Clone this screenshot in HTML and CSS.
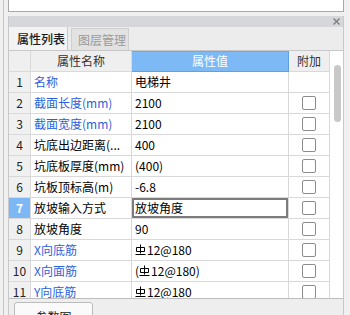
FILE: index.html
```html
<!DOCTYPE html>
<html>
<head>
<meta charset="utf-8">
<link rel="stylesheet" href="styles.css">
</head>
<body>
<div class="page">
  <div class="topbox"></div>
  <div class="panel">
    <div class="panel-head">
      <svg class="close" width="7" height="7" viewBox="0 0 7 7"><path d="M0.5 0.5L6.5 6.5M6.5 0.5L0.5 6.5" stroke="#7d7d7d" stroke-width="1.4" fill="none"/></svg>
    </div>
    <div class="tabs">
      <div class="tab active">属性列表</div>
      <div class="tab">图层管理</div>
    </div>
    <div class="grid-area">
      <div class="table">
        <div class="row head">
          <div class="c num"></div>
          <div class="c name">属性名称</div>
          <div class="c val">属性值</div>
          <div class="c ext">附加</div>
        </div>
        <div class="row">
          <div class="c num">1</div>
          <div class="c name link">名称</div>
          <div class="c val">电梯井</div>
          <div class="c ext"></div>
        </div>
        <div class="row">
          <div class="c num">2</div>
          <div class="c name link">截面长度(mm)</div>
          <div class="c val">2100</div>
          <div class="c ext"><span class="box"></span></div>
        </div>
        <div class="row">
          <div class="c num">3</div>
          <div class="c name link">截面宽度(mm)</div>
          <div class="c val">2100</div>
          <div class="c ext"><span class="box"></span></div>
        </div>
        <div class="row">
          <div class="c num">4</div>
          <div class="c name">坑底出边距离(...</div>
          <div class="c val">400</div>
          <div class="c ext"><span class="box"></span></div>
        </div>
        <div class="row">
          <div class="c num">5</div>
          <div class="c name">坑底板厚度(mm)</div>
          <div class="c val">(400)</div>
          <div class="c ext"><span class="box"></span></div>
        </div>
        <div class="row">
          <div class="c num">6</div>
          <div class="c name">坑板顶标高(m)</div>
          <div class="c val">-6.8</div>
          <div class="c ext"><span class="box"></span></div>
        </div>
        <div class="row">
          <div class="c num current">7</div>
          <div class="c name">放坡输入方式</div>
          <div class="c val focus">放坡角度</div>
          <div class="c ext"><span class="box"></span></div>
        </div>
        <div class="row">
          <div class="c num">8</div>
          <div class="c name">放坡角度</div>
          <div class="c val">90</div>
          <div class="c ext"><span class="box"></span></div>
        </div>
        <div class="row">
          <div class="c num">9</div>
          <div class="c name link">X向底筋</div>
          <div class="c val"><svg class="rebar" width="11" height="12" viewBox="0 0 11 12"><path d="M5.5 0.5V9.5M1.5 3.5H9.5V7.5H1.5ZM0.5 10.5H10.5" fill="none" stroke="#000" stroke-width="1"/></svg>12@180</div>
          <div class="c ext"><span class="box"></span></div>
        </div>
        <div class="row">
          <div class="c num">10</div>
          <div class="c name link">X向面筋</div>
          <div class="c val">(<svg class="rebar" width="11" height="12" viewBox="0 0 11 12"><path d="M5.5 0.5V9.5M1.5 3.5H9.5V7.5H1.5ZM0.5 10.5H10.5" fill="none" stroke="#000" stroke-width="1"/></svg>12@180)</div>
          <div class="c ext"><span class="box"></span></div>
        </div>
        <div class="row">
          <div class="c num">11</div>
          <div class="c name link">Y向底筋</div>
          <div class="c val"><svg class="rebar" width="11" height="12" viewBox="0 0 11 12"><path d="M5.5 0.5V9.5M1.5 3.5H9.5V7.5H1.5ZM0.5 10.5H10.5" fill="none" stroke="#000" stroke-width="1"/></svg>12@180</div>
          <div class="c ext"><span class="box"></span></div>
        </div>
      </div>
      <div class="scroll"><div class="thumb"></div></div>
    </div>
    <div class="bottom">
      <div class="btn">参数图</div>
    </div>
  </div>
</div>
</body>
</html>
```

FILE: styles.css
```css
html, body {
  margin: 0;
  height: 315px;
  overflow: hidden;
}
body {
  background: #f0f0f0;
  font-family: "Noto Sans CJK SC", "Noto Sans", sans-serif;
  font-size: 12px;
  color: #000;
}
.page {
  margin-left: 3px;
  border-left: 1px solid #c6c6c6;
  padding-left: 4px;
  width: 336px;
  height: 315px;
  overflow: hidden;
}
.topbox {
  box-sizing: border-box;
  height: 12px;
  background: #fff;
  border: 1px solid #a9a9a9;
  border-top: 0;
}
.panel {
  margin-top: 4px;
  box-sizing: border-box;
  width: 336px;
  border-left: 1px solid #c8c8c8;
  border-right: 1px solid #c8c8c8;
}
.panel-head {
  height: 11px;
  background: #d6d7db;
  display: flex;
  justify-content: flex-end;
  align-items: center;
  padding-right: 3px;
}
.close {
  display: block;
}
.tabs {
  height: 23px;
  background: #ececec;
  border-bottom: 1px solid #c8c8c8;
  display: flex;
  align-items: flex-end;
}
.tab {
  box-sizing: border-box;
  height: 22px;
  line-height: 21px;
  width: 58px;
  margin-left: 3px;
  padding-left: 6px;
  background: #e2e2e2;
  border: 1px solid #cfcfcf;
  border-bottom: 0;
  color: #9a9a9a;
  font-size: 12px;
}
.tab.active {
  margin-left: 0;
  width: 59px;
  height: 23px;
  line-height: 23px;
  padding-left: 8px;
  border: 0;
  border-right: 1px solid #c8c8c8;
  background: #f3f3f3;
  color: #1a1a1a;
  font-weight: 500;
}
.grid-area {
  display: flex;
  height: 247px;
  overflow: hidden;
  border-bottom: 1px solid #bdbdbd;
  background: #fff;
}
.table {
  flex: none;
}
.row {
  display: grid;
  grid-template-columns: 22px 101px 157px 41px;
  height: 21px;
}
.c {
  box-sizing: border-box;
  height: 21px;
  line-height: 20px;
  padding: 0 3px;
  border-right: 1px solid #d9d9d9;
  border-bottom: 1px solid #d9d9d9;
  white-space: nowrap;
  overflow: hidden;
  background: #fff;
}
.c.num {
  padding: 0;
  text-align: center;
  background: #f0f0f0;
  color: #222;
}
.c.num.current {
  background: #7cb8f5;
  color: #fff;
  font-weight: bold;
}
.head .c {
  background: #efefef;
  text-align: center;
  color: #333;
}
.head .c.val {
  background: #7db9f5;
  color: #fff;
  border-right-color: #5f9fe6;
  border-bottom-color: #5f9fe6;
  box-shadow: inset 0 1px 0 #6aaaf0;
}
.link {
  color: #2d5fdb;
}
.c.val.focus {
  box-shadow: inset 0 0 0 2px #7b7b7b;
}
.c.ext {
  display: flex;
  align-items: center;
  justify-content: center;
  padding: 0;
}
.box {
  display: block;
  box-sizing: border-box;
  width: 14px;
  height: 14px;
  border: 1px solid #8c8c8c;
  border-radius: 2px;
  background: #fff;
}
.rebar {
  vertical-align: -1px;
  margin-right: 1px;
}
.scroll {
  flex: none;
  width: 13px;
  background: #fff;
}
.thumb {
  width: 7px;
  height: 57px;
  margin: 14px 0 0 4px;
  border-radius: 4px;
  background: #c8c8c8;
}
.bottom {
  height: 13px;
  overflow: hidden;
  background: #eeeeee;
  padding: 3px 0 0 5px;
}
.btn {
  box-sizing: border-box;
  width: 79px;
  height: 22px;
  padding-top: 5px;
  text-align: center;
  background: #fafafa;
  border: 1px solid #bcbcbc;
  border-radius: 3px 3px 0 0;
  color: #222;
}
```
